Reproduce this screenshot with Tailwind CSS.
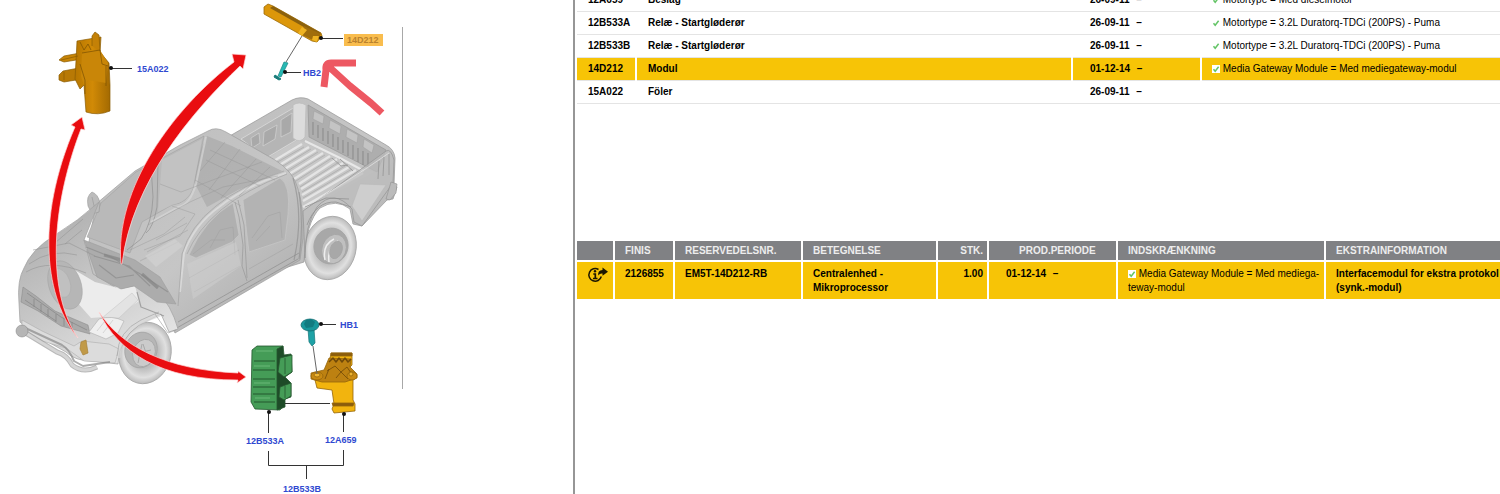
<!DOCTYPE html>
<html lang="da">
<head>
    <meta charset="UTF-8">
    <meta name="viewport" content="width=device-width, initial-scale=1.0">
    <title>Reservedele - 14D212 Modul</title>
    <script src="https://cdn.jsdelivr.net/npm/@tailwindcss/browser@4"></script>
</head>
<body class="bg-white text-black font-['Liberation_Sans',Arial,sans-serif] text-[10px] leading-[14px]">
    <svg class="hidden" aria-hidden="true">
        <symbol id="check" viewBox="0 0 8 8">
            <rect width="8" height="8" fill="#fff"/>
            <path d="M1.5 4.2 3.2 6.2 6.6 1.8" fill="none" stroke="#63c466" stroke-width="1.5"/>
        </symbol>
    </svg>
    <div class="flex min-h-screen overflow-hidden">
        <!-- Illustration -->
        <div class="w-[38.2%] shrink-0">
            <svg class="w-full" viewBox="0 0 573 494" role="img" aria-label="Illustration">
                <defs>
                    <linearGradient id="side" x1="0" y1="0" x2="1" y2="1">
                        <stop offset="0" stop-color="#bcbcbc"/>
                        <stop offset=".55" stop-color="#c6c6c6"/>
                        <stop offset="1" stop-color="#a9a9a9"/>
                    </linearGradient>
                    <linearGradient id="front" x1="0" y1="0" x2=".6" y2="1">
                        <stop offset="0" stop-color="#a6a6a6"/>
                        <stop offset=".6" stop-color="#c9c9c9"/>
                        <stop offset="1" stop-color="#e2e2e2"/>
                    </linearGradient>
                    <radialGradient id="tyre">
                        <stop offset=".5" stop-color="#bdbdbd"/>
                        <stop offset=".8" stop-color="#e0e0e0"/>
                        <stop offset="1" stop-color="#bbbbbb"/>
                    </radialGradient>
                    <linearGradient id="brass" x1="0" x2="1">
                        <stop offset="0" stop-color="#b67600"/>
                        <stop offset=".5" stop-color="#d18a06"/>
                        <stop offset="1" stop-color="#a36a02"/>
                    </linearGradient>
                </defs>

                <line x1="402.500" y1="27" x2="402.500" y2="389" stroke="#a8a8a8"/>

                <!-- wheels -->
                <g stroke="#a5a5a5" stroke-width=".8">
                    <ellipse cx="330" cy="248" rx="26" ry="32" transform="rotate(14 330 248)" fill="url(#tyre)"/>
                    <ellipse cx="331" cy="246" rx="17" ry="18" transform="rotate(20 331 246)" fill="#a8a8a8"/>
                    <ellipse cx="334" cy="249" rx="12" ry="15" transform="rotate(20 334 249)" fill="#c0c0c0"/>
                    <path d="M325 260Q322 245 334 239M329 262Q327 248 338 241" fill="none" stroke="#eee" stroke-width="1.500"/>
                    <ellipse cx="336" cy="250" rx="6" ry="9" transform="rotate(20 336 250)" fill="#a8a8a8"/>
                    <ellipse cx="145" cy="353" rx="26" ry="31" transform="rotate(14 145 353)" fill="url(#tyre)"/>
                    <ellipse cx="141" cy="350" rx="16" ry="18" transform="rotate(20 141 350)" fill="#b6b6b6"/>
                    <ellipse cx="144" cy="353" rx="11" ry="14" transform="rotate(20 144 353)" fill="#cbcbcb"/>
                    <path d="M138 363 142 344M134 354 151 350M143 344 149 362" stroke="#a0a0a0"/>
                </g>

                <!-- pickup bed -->
                <g stroke-linejoin="round" stroke-opacity=".75">
                    <path d="M228 137 292 100Q300 96 308 99L386 145Q394 149 395 158L394 185 397 187 393 199 387 200 362 226 353 224 350 209Q336 198 320 208 306 222 304 262L180 300Z" fill="url(#side)" stroke="#999"/>
                    <path d="M241 139 295 107 298 139 266 158Z" fill="#b5b5b5" stroke="#ddd"/>
                    <path d="M308 105 386 150 377 172 309 137Z" fill="#aeaeae" stroke="#999"/>
                    <path d="M293 105Q299 101 306 105L305 137Q300 144 293 138Z" fill="#dcdcdc" stroke="#bbb"/>
                    <path d="M298 140 374 172 302 211 297 182 265 160Z" fill="#c7c7c7"/>
                    <path d="M302 144 272 162M309 147 278 166M316 150 283 170M323 153 289 174M330 156 294 179M337 159 299 184M343 163 301 189M349 167 302 195M356 170 303 201M363 173 303 207" stroke="#ededed" stroke-width="2.500"/>
                    <path d="M304 147 274 164M311 149 280 168M318 152 286 172M325 155 291 176M332 158 296 181M339 162 300 187M345 166 302 192M352 169 303 198" stroke="#999" stroke-width=".6"/>
                    <path d="M313 122v13M318 125v13M323 128v13M328 131v13M333 134v13M338 137v13M343 140v13M348 142v14M353 145v14M358 148v14M363 151v14M368 153v14" stroke="#858585" stroke-width="1.200"/>
                    <path d="M314 111 324 116 323 124 313 119ZM330 120 341 126 340 134 329 128ZM347 129 358 135 357 143 346 137ZM364 139 374 145 372 153 363 147Z" fill="#c4c4c4" stroke="#9c9c9c" stroke-width=".6"/>
                    <path d="M251 138 259 133 260 143 252 148ZM264 132 277 125 275 139 263 146ZM281 120 292 113 291 132 281 137Z" fill="#a9a9a9" stroke="#d8d8d8" stroke-width=".8"/>
                    <path d="M305 141 338 157 364 171" fill="none" stroke="#f3f3f3" stroke-width="2"/>
                    <path d="M332 158 341 166 348 165M340 159 353 171" fill="none" stroke="#8e8e8e"/>
                    <path d="M303 211 386 151Q391 148 394 160L393 183 362 226 354 222 352 209Q334 188 317 207 305 224 305 258Z" fill="#bdbdbd" fill-opacity=".72" stroke="#969696"/>
                    <path d="M305 208 367 168 389 153" fill="none" stroke="#e4e4e4"/>
                    <path d="M307 225Q316 201 336 202L351 207M305 207 326 198 349 199" fill="none" stroke="#8f8f8f"/>
                    <path d="M352 206 360 184 386 185 362 221Z" fill="#cecece" stroke="#b5b5b5" stroke-width=".6"/>
                    <path d="M391 182 397 184 396 193 390 200 386 199Z" fill="#bbb" stroke="#888" stroke-width=".7"/>
                    <path d="M379 161 378 179M384 157 383 176M389 154 389 175" stroke="#929292"/>
                </g>

                <!-- cab and doors -->
                <g stroke-linejoin="round" stroke-opacity=".65">
                    <path d="M96 204 135 171 180 145 208 131Q216 126 226 132L275 160Q294 172 298 189 304 208 303 238L300 260 175 333 166 316 142 296 134 287 81 284Z" fill="url(#side)" stroke="#9a9a9a"/>
                    <path d="M207 136 232 146 282 171 238 190 207 207 190 174Z" fill="#a0a0a0" fill-opacity=".5"/>
                    <path d="M101 203 136 172 204 136 193 188Q188 203 172 205L142 222 130 253 87 237Z" fill="#b9b9b9" stroke="#999" stroke-width=".7"/>
                    <path d="M162 160 202 139 193 188Q188 202 172 205L158 212Z" fill="#c6c6c6" fill-opacity=".7"/>
                    <path d="M151 166 153 197Q152 224 141 239L127 250M158 163 157 207Q153 228 146 233" fill="none" stroke="#8f8f8f"/>
                    <path d="M206 137 196 184Q190 205 178 207L151 222" fill="none" stroke="#d8d8d8" stroke-width="2"/>
                    <path d="M286 173Q243 187 219 207 194 225 184 253L180 292" fill="none" stroke="#e3e3e3" stroke-width="2"/>
                    <path d="M284 171Q240 186 216 206 190 226 182 254L178 306M287 174Q245 190 221 210 197 230 187 254" fill="none" stroke="#909090" stroke-width=".7"/>
                    <path d="M235 202 239 217 243 245 242 266 247 281M238 200 244 225 247 278" fill="none" stroke="#969696"/>
                    <path d="M189 255Q205 219 233 203L239 235 232 242 196 258Z" fill="#b0b0b0" stroke="#ccc" stroke-width=".8"/>
                    <path d="M243 200 280 178Q291 185 288 214L285 240 249 252Z" fill="#b3b3b3" stroke="#ccc" stroke-width=".8"/>
                    <path d="M293 178Q304 215 294 260M299 192Q304 225 299 259" fill="none" stroke="#8e8e8e" stroke-width="1.200"/>
                    <path d="M172 206 195 214 180 236 144 250M148 225 190 202 223 187 278 176M130 250 164 234 185 217M160 184 181 192 218 178 262 162M206 160 260 186M195 180 241 206M210 150 275 180M225 142 200 171M240 149 209 190M256 159 221 198M270 167 239 196" fill="none" stroke="#949494" stroke-width=".6"/>
                    <path d="M156 240 187 223M147 252 188 230M140 261 178 242M189 278 223 259 239 250M194 292 240 266M249 269 293 244M252 238 268 216 280 212 282 238M256 241 270 226M210 248 220 230 233 227 235 255M193 254 211 240 225 240" fill="none" stroke="#a0a0a0" stroke-width=".8"/>
                    <path d="M145 256 175 239 183 246 156 267Z" fill="#d0d0d0" fill-opacity=".8"/>
                    <path d="M187 264 236 242 241 266 193 299Z" fill="#d0d0d0" fill-opacity=".5"/>
                    <path d="M175 329 298 259M178 322 299 253" stroke="#8b8b8b"/>
                    <path d="M88 206Q86 196 92 192 98 194 100 203L99 212 92 214Z" fill="#bcbcbc" stroke="#909090" stroke-width=".8"/>
                    <path d="M92 197 95 210" stroke="#999"/>
                </g>

                <!-- bonnet and front end -->
                <g stroke-linejoin="round" stroke-opacity=".7">
                    <path d="M99 202Q78 221 55 235 31 250 24 268 17 280 19 303L20 322 34 334 66 352Q75 361 92 361L118 364Q118 340 139 325L161 314 169 332 178 329Q171 304 157 292L136 286 118 289 93 274 84 240Z" fill="url(#front)" stroke="#9f9f9f"/>
                    <path d="M73 269 95 282 122 289 135 286 139 301 117 316 91 318 75 300Z" fill="#ececec"/>
                    <path d="M102 318 132 293 138 300 119 318Z" fill="#e3e3e3" stroke="#bcbcbc" stroke-width=".6"/>
                    <path d="M84 240 135 260 160 277 176 304 157 302 134 286 121 289 97 277Z" fill="#acacac" stroke="#999" stroke-width=".7"/>
                    <path d="M86 247 111 257 142 275 168 292M94 256 129 266 150 286M99 265 116 278 134 275M137 292 141 307 164 316" fill="none" stroke="#8b8b8b" stroke-width="1.200"/>
                    <path d="M104 255 122 260M142 274 158 288" stroke="#858585" stroke-width="3"/>
                    <ellipse cx="65" cy="285" rx="16" ry="25" transform="rotate(-20 65 285)" fill="#b6b6b6" stroke="#a2a2a2" stroke-width=".7"/>
                    <ellipse cx="61" cy="283" rx="9" ry="15" transform="rotate(-20 61 283)" fill="#c0c0c0" stroke="#aaa" stroke-width=".7"/>
                    <path d="M29 264Q51 248 77 255M26 272Q50 258 86 273M33 250 69 243 95 256M65 244 82 230M49 248 83 219" fill="none" stroke="#949494" stroke-width=".8"/>
                    <path d="M23 287 36 296 55 311 88 325 90 334 61 326 38 311 21 302Z" fill="#aaa" stroke="#848484" stroke-width=".7"/>
                    <path d="M27 293 61 317 87 330M25 300 56 321M34 299v8M41 304v8M48 309v8M56 314v8M64 318v8M72 322v7" fill="none" stroke="#858585"/>
                    <path d="M89 332 99 319Q112 315 124 321L118 333 106 339Z" fill="#efefef" stroke="#aaa" stroke-width=".8"/>
                    <path d="M97 331 105 321M103 333 113 320" stroke="#c9c9c9"/>
                    <path d="M22 320 42 331 74 346 82 341 109 344 119 349 115 363 84 361 66 348 42 341 22 328Z" fill="#dcdcdc" stroke="#a4a4a4" stroke-width=".7"/>
                    <path d="M21 326 62 345Q69 349 74 361L83 366 110 362" fill="none" stroke="#898989" stroke-width="2"/>
                    <path d="M24 332 57 352Q67 355 72 365 83 374 97 367" fill="none" stroke="#9b9b9b" stroke-width="5"/>
                    <path d="M24 332 57 352Q67 355 72 365 83 374 97 367" fill="none" stroke="#e1e1e1" stroke-width="3"/>
                    <ellipse cx="22" cy="331" rx="6" ry="6" fill="#b5b5b5" stroke="#888" stroke-width=".8"/>
                    <path d="M119 358Q119 333 142 322L160 315" fill="none" stroke="#d9d9d9" stroke-width="3"/>
                    <path d="M117 356Q118 331 141 320L159 312M155 314 168 333 176 330" fill="none" stroke="#999" stroke-width=".8"/>
                </g>
                <path d="M81 342 86 340 88 353 83 355 80 349Z" fill="#c19a48" stroke="#a78339" stroke-width=".7"/>

                <!-- location arrows -->
                <g fill="#e90d10" stroke="#ffd9d9" stroke-width=".7">
                    <path d="M78 338C46 300 34 222 75 127L71 125 82 117 85 130 81 129C47 218 50 298 78 338Z"/>
                    <path d="M121 264C114 188 174 108 234 62L232 54 246 55 243 69 240 66C192 112 132 182 122 264Z"/>
                    <path d="M99 312C120 345 165 370 238 373V371L246 377 237 383 238 380C160 380 118 352 99 312Z"/>
                </g>

                <!-- sensor 15A022 -->
                <g stroke="#8a5b05" stroke-width=".7" stroke-linejoin="round">
                    <path d="M59 60 64 56 80 53 82 59 64 62Z" fill="#c88506"/>
                    <path d="M59 75 63 71 79 68 82 79 64 82 59 80Z" fill="#b87905"/>
                    <path d="M77 41 101 37 100 52 109 63 110 85V111Q98 116 86 112L84 85 80 89 75 79 76 61Z" fill="url(#brass)"/>
                    <path d="M82 53 100 50 108 63 106 83 88 80 84 86 81 76Z" fill="#c98608" stroke="none"/>
                    <path d="M92 46V36L95 32 99 35 100 51" fill="#c48107"/>
                    <path d="M80 42 84 50 88 44 91 50M80 64 85 80M82 53 100 50 102 64 108 66M85 80V94M106 66 106 86" fill="none" stroke="#7a5003"/>
                    <path d="M61 60 78 56M64 72V80" stroke="#8b5b02"/>
                </g>

                <!-- module 14D212 -->
                <g stroke-linejoin="round">
                    <path d="M264 7 268 4 273 6 321 33 322 36 317 42 312 41 264 14Z" fill="#dc970a" stroke="#9c6b08" stroke-width=".8"/>
                    <path d="M273 6 321 33 318 35 270 8Z" fill="#8b610e"/>
                    <path d="M304 26 321 34 317 42 302 35Z" fill="#a06d0b"/>
                    <path d="M302 27 307 30 302 36 298 33ZM313 36 319 36 317 42 312 40Z" fill="#efb321"/>
                </g>
                <path d="M302 36 286 62" stroke="#666" fill="none"/>
                <path d="M284 62 288 63 281 77 278 76Z" fill="#27b9b4" stroke="#158782" stroke-width=".7"/>
                <path d="M275 75 281 79 279 80 274 77Z" fill="#177b79" stroke="#177b79"/>

                <!-- relay 12B533A -->
                <g stroke="#24572e" stroke-width=".8" stroke-linejoin="round">
                    <path d="M252 350 257 346 283 346 282 355 278 358 284 405 280 410 255 409 251 402Z" fill="#459c57"/>
                    <path d="M277 349 283 346 284 355 291 354 292 372 285 377 291 383V397L285 399V407L277 410Z" fill="#1e4b28"/>
                    <path d="M280 358 292 355 292 372 284 377 278 372ZM280 387 291 383V396L284 400 279 397Z" fill="#459c57"/>
                    <path d="M285 358V374M285 386V398" fill="none"/>
                    <path d="M254 361H275M253 370H275M253 379H275M253 387H275M253 394H275M254 402H275" stroke-width="1.200"/>
                    <path d="M256 351H273M254 366H270M254 383H270M255 398H270" stroke="#74c080"/>
                </g>

                <!-- bracket 12A659 -->
                <g stroke="#94640a" stroke-width=".8" stroke-linejoin="round">
                    <path d="M331 353H352V365L347 370 353 378V400L355 404V411L334 413 332 409 334 404 332 390 317 388 315 380 328 370Z" fill="#f2b40e"/>
                    <path d="M329 358 351 359 350 367 357 374V378L345 382H322L311 379V373L324 370Z" fill="#bd8111"/>
                    <path d="M331 353H352V356H331ZM332 403H354L353 406H333Z" fill="#8b5d0c"/>
                    <path d="M329 362 333 358 336 362 339 358 342 362 345 358 348 362 351 359" fill="none" stroke="#704908" stroke-width="1.500"/>
                    <path d="M327 371 335 366 341 372 347 367 351 373M329 369 325 379M336 378 341 372 348 379" fill="none" stroke="#704908"/>
                    <ellipse cx="317" cy="376" rx="6" ry="4" fill="#c98a12"/>
                    <ellipse cx="317" cy="375" rx="3" ry="2" fill="#edb432"/>
                    <ellipse cx="352" cy="376" rx="5" ry="4" fill="#c98a12"/>
                    <ellipse cx="351" cy="374" rx="2" ry="2" fill="#edb432"/>
                </g>

                <!-- screw HB1 -->
                <path d="M313 346 317 374" stroke="#666"/>
                <path d="M308 329 314 329 315 343 312 346 309 342Z" fill="#1ea2a6" stroke="#167478" stroke-width=".7"/>
                <ellipse cx="310" cy="325" rx="9" ry="6" fill="#18979b" stroke="#136b70" stroke-width=".8"/>
                <path d="M304 324 306 320 311 319 315 322 313 327 306 328Z" fill="#127b80"/>

                <!-- leader lines -->
                <path d="M111 68.500H132M321 38.500H343M285 72.500H301M321 324.500H336M285 403.500H330M268.500 412V433M343.500 414V432M268.500 451V465.500H343.500V450M306.500 465.500V479" fill="none" stroke="#333"/>
                <g fill="#111">
                    <circle cx="111" cy="68" r="2"/>
                    <circle cx="321" cy="38" r="2"/>
                    <circle cx="285" cy="72" r="2"/>
                    <circle cx="321" cy="324" r="2"/>
                    <circle cx="269" cy="412" r="2"/>
                    <circle cx="344" cy="414" r="2"/>
                </g>

                <rect x="344" y="34" width="39" height="12" fill="#f9bd4e"/>
                <g class="text-[9px] font-bold" fill="#2f49d1">
                    <text x="137" y="72">15A022</text>
                    <text x="347" y="43" fill="#b9822f">14D212</text>
                    <text x="303" y="76">HB2</text>
                    <text x="340" y="328">HB1</text>
                    <text x="246" y="444">12B533A</text>
                    <text x="325" y="443">12A659</text>
                    <text x="283" y="492">12B533B</text>
                </g>

                <!-- marker arrow -->
                <g fill="none" stroke="#ec4a55" stroke-width="7" stroke-linejoin="round" opacity=".92">
                    <path d="M382 113 371 103 350 86 327 65M356 63H331Q325 63 326 70L324 87"/>
                </g>
            </svg>
        </div>

        <!-- Lists -->
        <div class="flex-1 min-w-0 border-l-2 border-[#969696] pl-0.5">
            <!-- scrolled to the last rows -->
            <div class="h-[104px] flex items-end overflow-hidden">
                <table class="w-full table-fixed border-collapse font-bold">
                    <colgroup>
                        <col class="w-[59px]">
                        <col class="w-[436px]">
                        <col class="w-[129px]">
                        <col>
                    </colgroup>
                    <tbody>
                        <tr class="h-[23px] border-b border-[#e4e4e4]">
                            <td class="pl-[11px]">12A659</td>
                            <td class="pl-[12px]">Beslag</td>
                            <td class="pl-[18px]">26-09-11 <span class="pl-1">–</span></td>
                            <td class="pl-[11px] font-normal"><svg class="inline w-2 h-2"><use href="#check"/></svg> Motortype = Med dieselmotor</td>
                        </tr>
                        <tr class="h-[23px] border-b border-[#e4e4e4]">
                            <td class="pl-[11px]">12B533A</td>
                            <td class="pl-[12px]">Relæ - Startgløderør</td>
                            <td class="pl-[18px]">26-09-11 <span class="pl-1">–</span></td>
                            <td class="pl-[11px] font-normal"><svg class="inline w-2 h-2"><use href="#check"/></svg> Motortype = 3.2L Duratorq-TDCi (200PS) - Puma</td>
                        </tr>
                        <tr class="h-[23px] border-b border-[#e4e4e4]">
                            <td class="pl-[11px]">12B533B</td>
                            <td class="pl-[12px]">Relæ - Startgløderør</td>
                            <td class="pl-[18px]">26-09-11 <span class="pl-1">–</span></td>
                            <td class="pl-[11px] font-normal"><svg class="inline w-2 h-2"><use href="#check"/></svg> Motortype = 3.2L Duratorq-TDCi (200PS) - Puma</td>
                        </tr>
                        <tr class="h-[23px] bg-[#f7c406] border-b border-[#e4e4e4]">
                            <td class="pl-[11px] border-r-2 border-r-white">14D212</td>
                            <td class="pl-[11px] border-r-2 border-r-white">Modul</td>
                            <td class="pl-[17px] border-r-2 border-r-white">01-12-14 <span class="pl-1">–</span></td>
                            <td class="pl-[10px] font-normal"><svg class="inline w-2 h-2"><use href="#check"/></svg> Media Gateway Module = Med mediegateway-modul</td>
                        </tr>
                        <tr class="h-[23px] border-b border-[#e4e4e4]">
                            <td class="pl-[11px]">15A022</td>
                            <td class="pl-[12px]">Föler</td>
                            <td class="pl-[18px]">26-09-11 <span class="pl-1">–</span></td>
                            <td></td>
                        </tr>
                    </tbody>
                </table>
            </div>

            <table class="mt-[135px] w-full table-fixed border-collapse font-bold">
                <colgroup>
                    <col class="w-[37px]">
                    <col class="w-[60px]">
                    <col class="w-[128px]">
                    <col class="w-[135px]">
                    <col class="w-[51px]">
                    <col class="w-[129px]">
                    <col class="w-[208px]">
                    <col>
                </colgroup>
                <thead>
                    <tr class="h-[21px] bg-[#808184] text-[#ededed] text-left border-y-2 border-white">
                        <th class="border-r-2 border-white"></th>
                        <th class="pl-2.5 border-r-2 border-white">FINIS</th>
                        <th class="pl-2.5 border-r-2 border-white">RESERVEDELSNR.</th>
                        <th class="pl-2.5 border-r-2 border-white">BETEGNELSE</th>
                        <th class="pr-1 text-right border-r-2 border-white">STK.</th>
                        <th class="pl-[30px] border-r-2 border-white">PROD.PERIODE</th>
                        <th class="pl-2.5 border-r-2 border-white">INDSKRÆNKNING</th>
                        <th class="pl-2.5">EKSTRAINFORMATION</th>
                    </tr>
                </thead>
                <tbody>
                    <tr class="h-[38px] bg-[#f7c406] align-top">
                        <td class="pt-[5px] pl-2.5 border-r-2 border-white">
                            <button type="button" class="block cursor-pointer" aria-label="Info">
                                <svg class="w-[22px] h-4" viewBox="0 0 22 16" fill="none" stroke="#1c1600">
                                    <path d="M11.500 2.500A6.300 6.300 0 1 0 14.300 9.500" stroke-width="1.500"/>
                                    <path d="M6.300 7H8.300V11.500M6 11.500H10.500" stroke-width="1.700"/>
                                    <circle cx="8" cy="4.300" r="1.200" fill="#1c1600" stroke="none"/>
                                    <path d="M11.200 8.500Q10.500 3.300 15.500 3V.5L21 4.800 15.500 8.800V6.500Q12.800 6.200 11.200 8.500Z" fill="#1c1600" stroke="none"/>
                                </svg>
                            </button>
                        </td>
                        <td class="pt-[5px] pl-2.5 border-r-2 border-white">2126855</td>
                        <td class="pt-[5px] pl-2.5 border-r-2 border-white">EM5T-14D212-RB</td>
                        <td class="pt-[5px] pl-2.5 border-r-2 border-white">Centralenhed -<br>Mikroprocessor</td>
                        <td class="pt-[5px] pr-1 text-right border-r-2 border-white">1.00</td>
                        <td class="pt-[5px] pl-[17px] border-r-2 border-white">01-12-14 <span class="pl-1">–</span></td>
                        <td class="pt-[5px] pl-2.5 border-r-2 border-white font-normal"><svg class="inline w-2 h-2"><use href="#check"/></svg> Media Gateway Module = Med mediega-<br>teway-modul</td>
                        <td class="pt-[5px] pl-2.5 whitespace-nowrap">Interfacemodul for ekstra protokol<br>(synk.-modul)</td>
                    </tr>
                </tbody>
            </table>
        </div>
    </div>
</body>
</html>
